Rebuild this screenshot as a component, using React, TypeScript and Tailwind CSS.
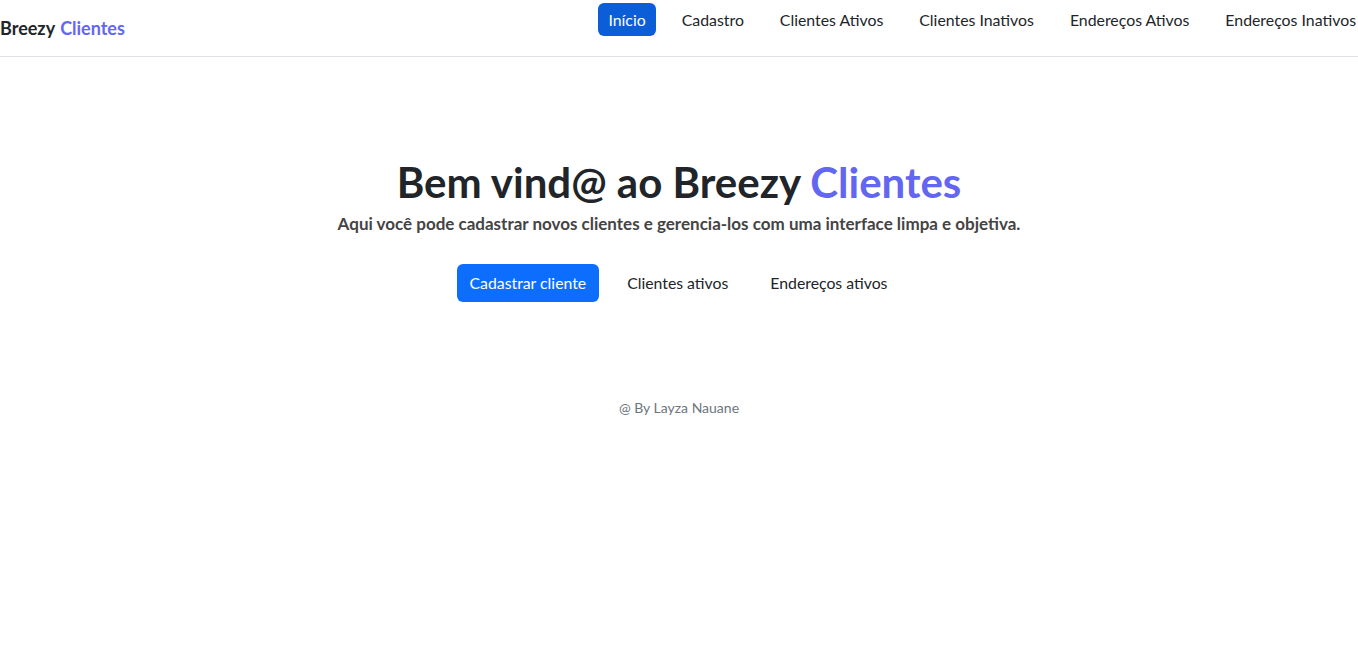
import React from "react";

const font = { fontFamily: "Lato, 'Noto Sans', sans-serif" };

export default function App() {
  const links = ["Cadastro", "Clientes Ativos", "Clientes Inativos", "Endereços Ativos", "Endereços Inativos"];
  return (
    <div className="min-h-[660px] bg-white text-[#212529]" style={font}>
      <header className="flex h-[57px] items-start justify-between border-b border-[#dee2e6]">
        <div className="flex h-[56px] items-center text-[18px] font-bold leading-none">
          <span className="text-[#212529]">Breezy</span>
          <span className="ml-[5px] text-[#6366f1]">Clientes</span>
        </div>
        <nav className="mr-[-8px] mt-[3px] flex items-center gap-[16px] text-[15.85px]">
          <a className="rounded-[6px] bg-[#0b5ed7] px-[10px] py-[6px] text-white leading-[21px]">Início</a>
          {links.map((l) => (
            <a key={l} className="px-[10px] py-[6px] leading-[21px] text-[#212529]">
              {l}
            </a>
          ))}
        </nav>
      </header>
      <main className="flex flex-col items-center pt-[100px]">
        <h1 className="text-[42px] font-bold leading-[50px] text-[#212529]">
          Bem vind@ ao Breezy <span className="text-[#6366f1]">Clientes</span>
        </h1>
        <p className="mt-[6px] text-[17px] font-bold leading-[22px] text-[#444]">
          Aqui você pode cadastrar novos clientes e gerencia-los com uma interface limpa e objetiva.
        </p>
        <div className="mt-[29px] flex items-center gap-[14px] text-[15.8px]">
          <a className="flex h-[38px] items-center rounded-[6px] bg-[#0d6efd] px-[13px] text-white">Cadastrar cliente</a>
          <a className="flex h-[38px] items-center px-[14px] text-[#212529]">Clientes ativos</a>
          <a className="flex h-[38px] items-center px-[14px] text-[#212529]">Endereços ativos</a>
        </div>
        <footer className="mt-[95px] text-[14px] text-[#6c757d]">@ By Layza Nauane</footer>
      </main>
    </div>
  );
}
